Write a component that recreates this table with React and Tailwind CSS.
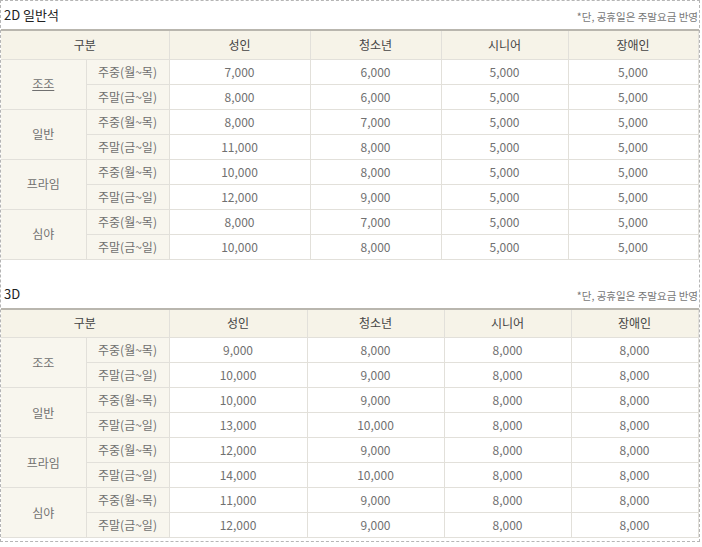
import { Fragment } from "react";

const FONT = { fontFamily: '"Noto Sans CJK KR", "Noto Sans", sans-serif' };

const TABLES = [
  {
    title: "2D 일반석",
    titleClass: "h-[28px] items-center",
    cols: ["w-[141px]", "w-[131px]", "w-[127px]", "w-[130px]"],
    rows: [
      ["조조", ["7,000", "6,000", "5,000", "5,000"], ["8,000", "6,000", "5,000", "5,000"], true],
      ["일반", ["8,000", "7,000", "5,000", "5,000"], ["11,000", "8,000", "5,000", "5,000"]],
      ["프라임", ["10,000", "8,000", "5,000", "5,000"], ["12,000", "9,000", "5,000", "5,000"]],
      ["심야", ["8,000", "7,000", "5,000", "5,000"], ["10,000", "8,000", "5,000", "5,000"]],
    ],
  },
  {
    title: "3D",
    titleClass: "h-[48px] items-end pb-[4px]",
    cols: ["w-[138px]", "w-[137px]", "w-[127px]", "w-[127px]"],
    rows: [
      ["조조", ["9,000", "8,000", "8,000", "8,000"], ["10,000", "9,000", "8,000", "8,000"]],
      ["일반", ["10,000", "9,000", "8,000", "8,000"], ["13,000", "10,000", "8,000", "8,000"]],
      ["프라임", ["12,000", "9,000", "8,000", "8,000"], ["14,000", "10,000", "8,000", "8,000"]],
      ["심야", ["11,000", "9,000", "8,000", "8,000"], ["12,000", "9,000", "8,000", "8,000"]],
    ],
  },
];

function PriceTable({ table }) {
  const cell = "h-[25px] border border-[#e2e0da] text-center text-[12px] text-[#707070] font-normal p-0";
  const beige = "bg-[#f8f6ee]";
  return (
    <div>
      <div className={`flex justify-between pl-[3px] pr-[1px] ${table.titleClass}`}>
        <span className="text-[13px] text-[#222]">{table.title}</span>
        <span className="text-[10.5px] text-[#777] whitespace-nowrap mt-[4px]">*단, 공휴일은 주말요금 반영</span>
      </div>
      <table className="w-[697px] border-collapse table-fixed border-t-2 border-t-[#b9b6ae]">
        <colgroup>
          <col className="w-[85px]" />
          <col className="w-[83px]" />
          {table.cols.map((c, i) => (
            <col key={i} className={c} />
          ))}
        </colgroup>
        <thead>
          <tr className="bg-[#f6f3e8]">
            <th colSpan={2} className="h-[29px] border border-[#e2e0da] border-t-[#b9b6ae] text-[12px] text-[#444] font-normal border-l-0">
              구분
            </th>
            {["성인", "청소년", "시니어", "장애인"].map((h) => (
              <th key={h} className="h-[29px] border border-[#e2e0da] border-t-[#b9b6ae] text-[12px] text-[#444] font-normal">
                {h}
              </th>
            ))}
          </tr>
        </thead>
        <tbody>
          {table.rows.map(([label, wk, we, link]) => (
            <Fragment key={label}>
              <tr>
                <td rowSpan={2} className={`${cell} ${beige} border-l-0`}>
                  <span className={link ? "underline" : ""}>{label}</span>
                </td>
                <td className={`${cell} ${beige}`}>주중(월~목)</td>
                {wk.map((v, i) => (
                  <td key={i} className={cell}>{v}</td>
                ))}
              </tr>
              <tr>
                <td className={`${cell} ${beige}`}>주말(금~일)</td>
                {we.map((v, i) => (
                  <td key={i} className={cell}>{v}</td>
                ))}
              </tr>
            </Fragment>
          ))}
        </tbody>
      </table>
    </div>
  );
}

export default function App() {
  return (
    <div className="w-[702px] h-[547px] bg-white overflow-hidden" style={FONT}>
      <div className="w-[700px] h-[542px] border border-dashed border-[#b5b5b5] overflow-hidden">
        {TABLES.map((t) => (
          <PriceTable key={t.title} table={t} />
        ))}
      </div>
    </div>
  );
}
